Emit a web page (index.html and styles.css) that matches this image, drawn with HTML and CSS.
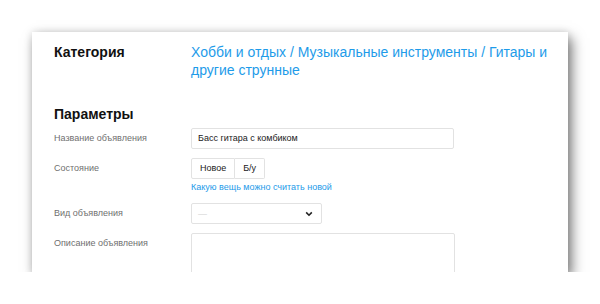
FILE: index.html
```html
<!DOCTYPE html>
<html lang="ru">
<head>
<meta charset="utf-8">
<link rel="stylesheet" href="styles.css">
</head>
<body>
<div class="card">
  <div class="cat-row">
    <div class="cat-label">Категория</div>
    <div class="cat-value">Хобби и отдых / Музыкальные инструменты / Гитары и другие струнные</div>
  </div>
  <h2 class="section-title">Параметры</h2>
  <div class="row">
    <div class="label">Название объявления</div>
    <div class="field"><div class="input">Басс гитара с комбиком</div></div>
  </div>
  <div class="row">
    <div class="label">Состояние</div>
    <div class="field">
      <div class="toggle"><span class="tbtn">Новое</span><span class="tbtn">Б/у</span></div>
      <div class="hint">Какую вещь можно считать новой</div>
    </div>
  </div>
  <div class="row">
    <div class="label">Вид объявления</div>
    <div class="field">
      <div class="select"><span class="dash">—</span>
        <svg class="chev" width="8" height="6" viewBox="0 0 8 6"><path d="M1.2 1.4 L4 4.2 L6.8 1.4" fill="none" stroke="#222" stroke-width="1.6"/></svg>
      </div>
    </div>
  </div>
  <div class="row">
    <div class="label">Описание объявления</div>
    <div class="field"><div class="textarea"></div></div>
  </div>
</div>
</body>
</html>
```
FILE: styles.css
```css
html, body { margin: 0; padding: 0; background: #fff; }
body { font-family: "Liberation Sans", Arial, sans-serif; color: #111; }
.card {
  margin: 32px 0 0 32px;
  width: 536px;
  height: 240px;
  background: #fff;
  box-shadow: 4px 6px 12px rgba(0,0,0,0.5), 0 0 8px rgba(0,0,0,0.12);
  overflow: hidden;
  box-sizing: border-box;
  padding: 11px 0 0 22px;
}
.cat-row { display: flex; }
.cat-label { width: 137px; font-size: 14px; font-weight: bold; line-height: 18px; }
.cat-value { width: 362px; font-size: 14px; line-height: 18px; color: #1e9be9; }
.section-title { margin: 26px 0 5px; font-size: 14px; line-height: 18px; font-weight: bold; }
.row { display: flex; margin-bottom: 9px; }
.label { width: 137px; font-size: 9px; color: #6f6f6f; line-height: 12px; padding-top: 4px; }
.field { display: flex; flex-direction: column; }
.input {
  width: 263px; height: 21px; box-sizing: border-box;
  border: 1px solid #e2e2e2; border-radius: 2px;
  font-size: 9px; line-height: 19px; padding-left: 6px; color: #222;
}
.toggle { display: flex; }
.tbtn {
  height: 21px; box-sizing: border-box; border: 1px solid #e2e2e2;
  font-size: 9px; line-height: 19px; padding: 0 8px; color: #222;
}
.tbtn + .tbtn { border-left: none; }
.tbtn:first-child { border-radius: 2px 0 0 2px; }
.tbtn:last-child { border-radius: 0 2px 2px 0; }
.hint { font-size: 9px; color: #1e9be9; line-height: 12px; margin-top: 2px; margin-bottom: 1px; }
.select {
  width: 131px; height: 21px; box-sizing: border-box;
  border: 1px solid #e2e2e2; border-radius: 2px;
  display: flex; align-items: center; justify-content: space-between;
  padding: 0 8px 0 6px;
}
.dash { color: #d0d0d0; font-size: 9px; }
.chev { display: block; }
.textarea {
  width: 264px; height: 60px; box-sizing: border-box;
  border: 1px solid #e2e2e2; border-radius: 2px;
}
```
